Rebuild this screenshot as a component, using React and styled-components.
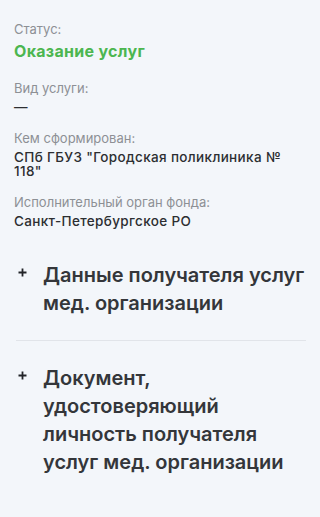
import React from "react";
import styled, { createGlobalStyle } from "styled-components";

const Global = createGlobalStyle`
  html, body { margin: 0; padding: 0; background: #f3f6fa; }
  body { font-family: Inter, "Noto Sans", sans-serif; -webkit-font-smoothing: antialiased; }
`;

const Page = styled.div`
  min-height: 517px;
  padding: 21px 14px 20px 14px;
  box-sizing: border-box;
  display: flex;
  flex-direction: column;
`;

const Fields = styled.div`
  display: flex;
  flex-direction: column;
  gap: 16px;
`;

const Field = styled.div`
  display: flex;
  flex-direction: column;
  gap: 3px;
  margin-bottom: ${(p) => (p.$status ? "3px" : "0")};
`;

const Label = styled.div`
  font-size: 13px;
  line-height: 17px;
  color: #8d9095;
  font-weight: 400;
`;

const Value = styled.div`
  font-size: ${(p) => (p.$status ? "16px" : "13.5px")};
  line-height: ${(p) => (p.$status ? "20px" : "14px")};
  font-weight: ${(p) => (p.$status ? 700 : 500)};
  color: ${(p) => (p.$status ? "#4cb650" : "#2c2e31")};
  letter-spacing: ${(p) => (p.$status ? "0.3px" : "0.35px")};
`;

const Sections = styled.div`
  margin-top: 33px;
  padding: 0 0 0 2px;
  display: flex;
  flex-direction: column;
`;

const Section = styled.div`
  display: flex;
  align-items: flex-start;
  gap: 16px;
  padding: ${(p) => (p.$first ? "0 0 23px" : "23px 0")};
  border-bottom: ${(p) => (p.$first ? "1px solid #e1e4e9" : "none")};
`;

const PlusIcon = styled.svg`
  flex: none;
  width: 9px;
  height: 9px;
  margin-top: 7px;
  margin-left: 2px;
`;

const SectionTitle = styled.div`
  font-size: 20px;
  line-height: 28px;
  font-weight: 600;
  color: #34363a;
`;

const Plus = () => (
  <PlusIcon viewBox="0 0 9 9">
    <path d="M4.5 0.5V8.5M0.5 4.5H8.5" stroke="#222428" strokeWidth="1.8" />
  </PlusIcon>
);

export default function App() {
  return (
    <>
      <Global />
      <Page>
        <Fields>
          <Field $status>
            <Label>Статус:</Label>
            <Value $status>Оказание услуг</Value>
          </Field>
          <Field>
            <Label>Вид услуги:</Label>
            <Value>—</Value>
          </Field>
          <Field>
            <Label>Кем сформирован:</Label>
            <Value>СПб ГБУЗ "Городская поликлиника № 118"</Value>
          </Field>
          <Field>
            <Label>Исполнительный орган фонда:</Label>
            <Value>Санкт-Петербургское РО</Value>
          </Field>
        </Fields>
        <Sections>
          <Section $first>
            <Plus />
            <SectionTitle>Данные получателя услуг мед. организации</SectionTitle>
          </Section>
          <Section>
            <Plus />
            <SectionTitle>Документ, удостоверяющий личность получателя услуг мед. организации</SectionTitle>
          </Section>
        </Sections>
      </Page>
    </>
  );
}
